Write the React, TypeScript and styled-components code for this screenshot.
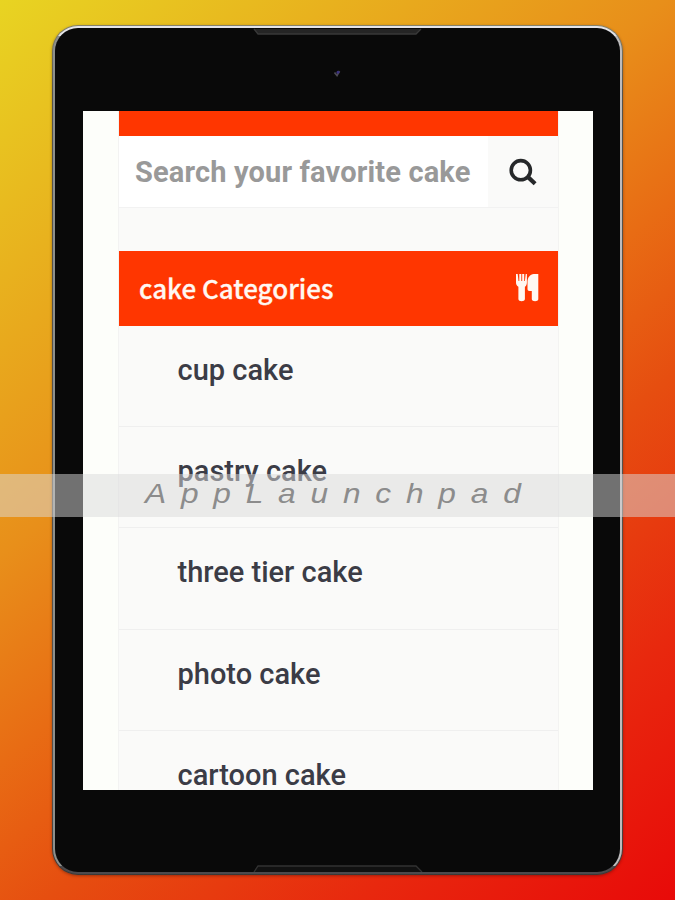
import React from 'react';
import styled, { createGlobalStyle } from 'styled-components';

const GlobalStyle = createGlobalStyle`
  * { box-sizing: border-box; }
  body { margin: 0; }
`;

const Stage = styled.main`
  position: relative;
  display: flex;
  width: 675px;
  height: 900px;
  padding: 25px 52px;
  overflow: hidden;
  background: linear-gradient(140deg, #e8d422 0%, #e88f1a 38%, #e86c14 52%, #e64e10 64%, #e8280e 82%, #e80a09 100%);
  font-family: Roboto, sans-serif;
`;

const Rim = styled.div`
  display: flex;
  width: 572px;
  height: 850px;
  padding: 1px;
  border-radius: 26px;
  background: linear-gradient(180deg, #85826a, #55534c 8%, #55514d 90%, #3c3836);
  box-shadow: 0 1px 3px rgba(60, 10, 0, 0.4);
`;

const Bezel = styled.div`
  flex: 1;
  display: flex;
  padding: 2px;
  border-radius: 25px;
  background:
    linear-gradient(#e4e4e8, #e4e4e8) top / 100% 10px no-repeat,
    linear-gradient(#4c4a4d, #4c4a4d) bottom / 100% 8px no-repeat,
    linear-gradient(90deg, #8d8f8c 50%, #bdbbbc 50%);
`;

const Glass = styled.div`
  flex: 1;
  display: flex;
  flex-direction: column;
  align-items: center;
  border-radius: 23px;
  background: #090909;
`;

const TopBezel = styled.div`
  display: flex;
  flex-direction: column;
  align-items: center;
  height: 83px;
  flex: none;
`;

const SpeakerDrawing = styled.svg`
  display: block;
  flex: none;
`;

const CameraDrawing = styled.svg`
  display: block;
  margin-top: 33px;
`;

const Screen = styled.div`
  flex: none;
  width: 510px;
  height: 679px;
  padding: 0 35px 0 36px;
  overflow: hidden;
  background: #fdfefa;
`;

const BottomBezel = styled.div`
  flex: 1;
  display: flex;
  align-items: flex-end;
`;

const Panel = styled.div`
  height: 720px;
  background: #fafaf9;
  box-shadow: 0 0 0 1px #f3f3f2;
`;

const Banner = styled.div`
  height: 25px;
  background: #ff3600;
`;

const SearchBar = styled.div`
  display: flex;
  height: 72px;
  border-bottom: 1px solid #f2f2f2;
`;

const SearchInput = styled.div`
  width: 369px;
  padding: 0 0 0 16.5px;
  background: #fff;
  color: #999;
  font-size: 29px;
  font-weight: 700;
  line-height: 72px;
  letter-spacing: 0.15px;
  white-space: nowrap;
`;

const SearchButton = styled.div`
  flex: 1;
  padding: 22px 0 0 21px;
`;

const CategoryHeader = styled.div`
  display: flex;
  justify-content: space-between;
  height: 75px;
  margin-top: 43px;
  padding: 0 19px 0 20.5px;
  background: #ff3600;
  color: #fff8f2;
`;

const CategoryTitle = styled.div`
  font-family: 'Noto Sans CJK SC', sans-serif;
  font-size: 26px;
  font-weight: 500;
  line-height: 73px;
  -webkit-text-stroke: 0.3px currentColor;
  white-space: nowrap;
`;

const CutleryDrawing = styled.svg`
  display: block;
  margin-top: 22px;
`;

const CategoryRow = styled.div`
  height: 101.2px;
  padding-left: 59px;
  border-bottom: 1px solid #efefef;
  color: #3b3c46;
  font-size: 29px;
  font-weight: 500;
  line-height: 89px;
  white-space: nowrap;
`;

const WatermarkBand = styled.div`
  position: absolute;
  left: 0;
  top: 474px;
  width: 675px;
  height: 43px;
  padding-left: 145px;
  background: rgba(218, 218, 218, 0.5);
`;

const WatermarkText = styled.span`
  display: inline-block;
  transform: scaleX(1.13);
  transform-origin: left;
  color: #8c8c8c;
  font-family: 'Liberation Sans', sans-serif;
  font-size: 28px;
  font-style: italic;
  line-height: 39px;
  letter-spacing: 13.1px;
  white-space: nowrap;
`;

const categories = ['cup cake', 'pastry cake', 'three tier cake', 'photo cake', 'cartoon cake'];

const Speaker = ({ bottom = false }: { bottom?: boolean }) => (
  <SpeakerDrawing width="170" height="7" viewBox="0 0 170 7">
    <path
      d={bottom ? 'M1 7 5 1H163L169 7' : 'M1 1 5 6H163L168 1'}
      fill={bottom ? '#111' : '#252525'}
      stroke={bottom ? '#323232' : '#393939'}
      strokeWidth="1.3"
    />
  </SpeakerDrawing>
);

const Camera = () => (
  <CameraDrawing width="9" height="10" viewBox="0 0 9 10">
    <path d="M1.500 4.500 4 7.500 6.500 3" fill="none" stroke="#4b4952" strokeWidth="1.800" />
    <circle cx="5" cy="4.200" r="1.500" fill="#3c3280" />
  </CameraDrawing>
);

const Magnifier = () => (
  <svg width="30" height="30" viewBox="0 0 30 30">
    <circle cx="11.800" cy="12.200" r="9.600" fill="none" stroke="#26282a" strokeWidth="3.600" />
    <path d="m18.800 18.900 7.300 6.900" stroke="#26282a" strokeWidth="4.200" />
  </svg>
);

const Cutlery = () => (
  <CutleryDrawing width="24" height="29" viewBox="0 0 24 29">
    <path
      d="M1 1h1.700l.8 7h.8V1h2v7h.9V1h2v7h.7l.8-7h1.200v8.500c0 2.400-1 3.600-2 4.200V26c0 3-6.500 3-6.500 0V13.700C1.900 13 1 11.600 1 9.500Z"
      fill="currentColor"
    />
    <path d="M23.300 1h-4.500c-3.800 0-6.300 3.800-6.300 8v7c0 1.300.7 2 2 2h2.300v8.200c0 2.600 6.500 2.600 6.500 0Z" fill="currentColor" />
  </CutleryDrawing>
);

export default function App() {
  return (
    <Stage>
      <GlobalStyle />
      <Rim>
        <Bezel>
          <Glass>
            <TopBezel>
              <Speaker />
              <Camera />
            </TopBezel>
            <Screen>
              <Panel>
                <Banner />
                <SearchBar>
                  <SearchInput>Search your favorite cake</SearchInput>
                  <SearchButton>
                    <Magnifier />
                  </SearchButton>
                </SearchBar>
                <CategoryHeader>
                  <CategoryTitle>cake Categories</CategoryTitle>
                  <Cutlery />
                </CategoryHeader>
                {categories.map((name) => (
                  <CategoryRow key={name}>{name}</CategoryRow>
                ))}
              </Panel>
            </Screen>
            <BottomBezel>
              <Speaker bottom />
            </BottomBezel>
          </Glass>
        </Bezel>
      </Rim>
      <WatermarkBand>
        <WatermarkText>AppLaunchpad</WatermarkText>
      </WatermarkBand>
    </Stage>
  );
}
